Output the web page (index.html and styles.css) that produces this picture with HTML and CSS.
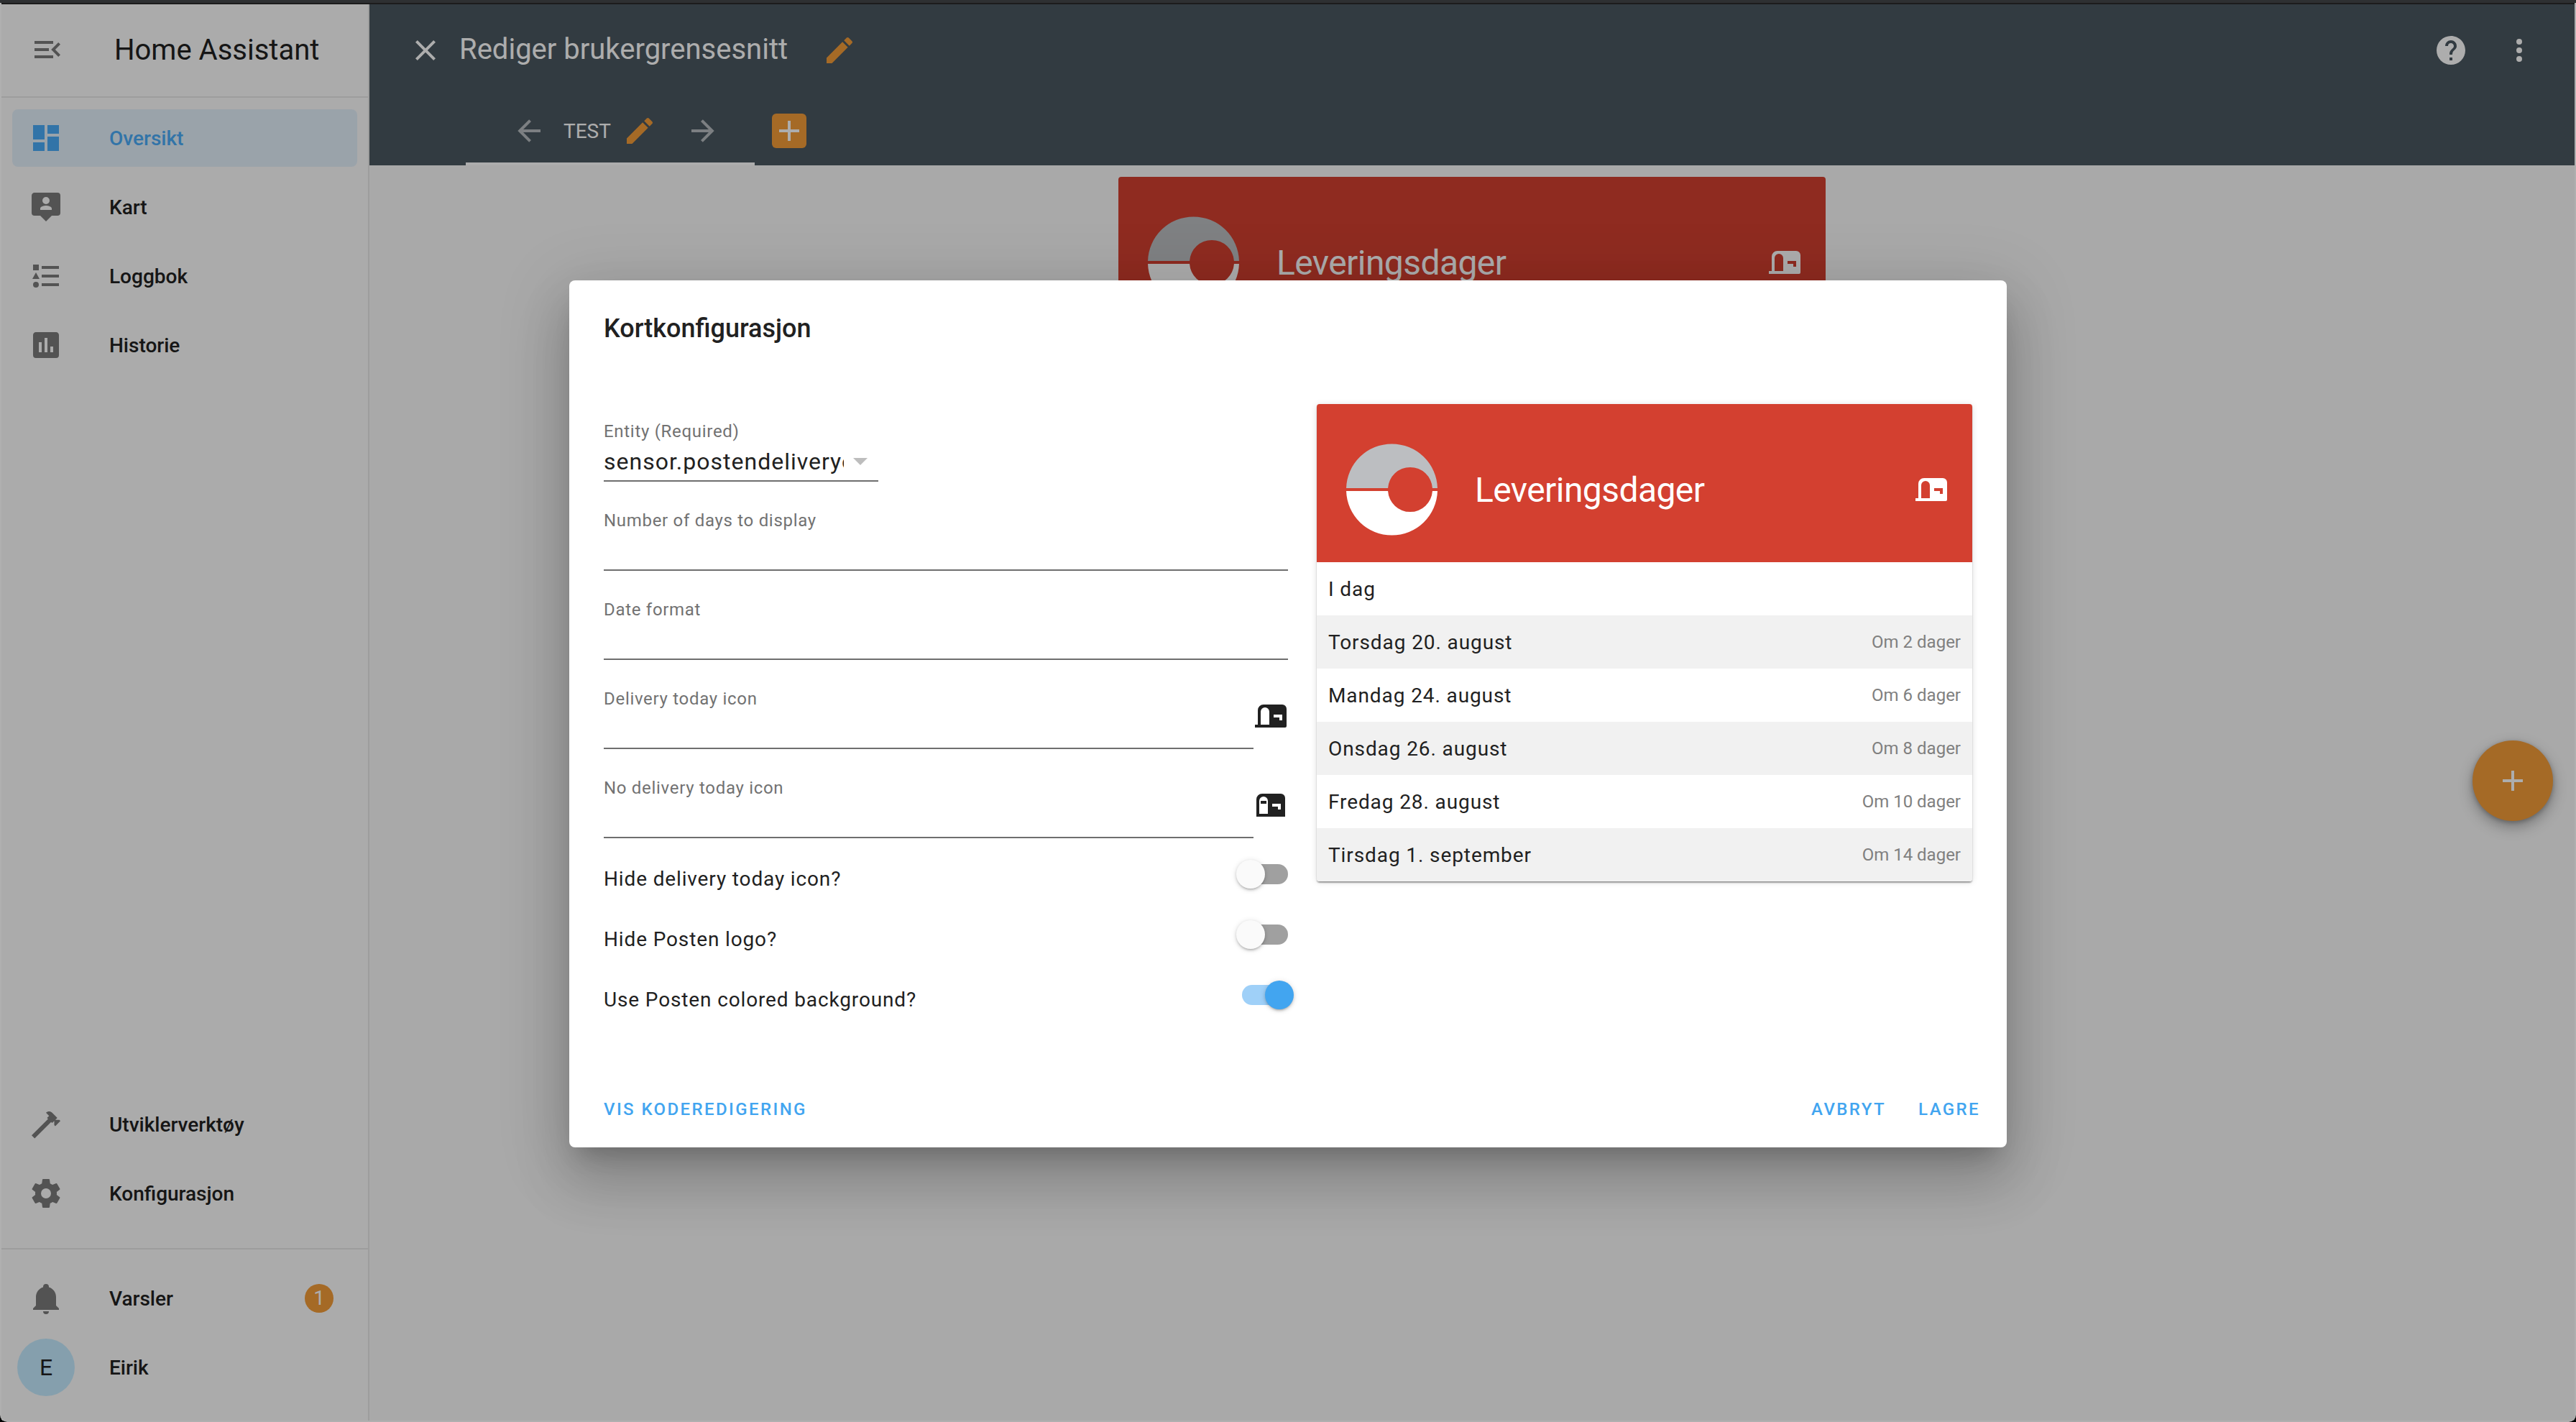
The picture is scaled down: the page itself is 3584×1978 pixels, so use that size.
FILE: index.html
```html
<!DOCTYPE html>
<html lang="nb">
<head>
  <meta charset="utf-8">
  <title>Home Assistant</title>
  <link rel="stylesheet" href="styles.css">
</head>
<body>

  <svg class="sprite" xmlns="http://www.w3.org/2000/svg">
    <symbol id="i-menu-open" viewBox="0 0 24 24"><path d="M21,15.61L19.59,17L14.58,12L19.59,7L21,8.39L17.44,12L21,15.61M3,6H16V8H3V6M3,13V11H13V13H3M3,18V16H16V18H3Z"/></symbol>
    <symbol id="i-dashboard" viewBox="0 0 24 24"><path d="M13,3V9H21V3M13,21H21V11H13M3,21H11V15H3M3,13H11V3H3V13Z"/></symbol>
    <symbol id="i-map" viewBox="0 0 24 24"><path fill-rule="evenodd" d="M2,4C2,2.89 2.9,2 4,2H20A2,2 0 0,1 22,4V16A2,2 0 0,1 20,18H16L12,22L8,18H4A2,2 0 0,1 2,16V4M16,14V13C16,11.67 13.33,11 12,11C10.67,11 8,11.67 8,13V14H16M12,5A2.5,2.5 0 0,0 9.5,7.5A2.5,2.5 0 0,0 12,10A2.5,2.5 0 0,0 14.5,7.5A2.5,2.5 0 0,0 12,5Z"/></symbol>
    <symbol id="i-log" viewBox="0 0 24 24"><path d="M5,9.5L7.5,14H2.5L5,9.5M3,4H7V8H3V4M5,20A2,2 0 0,0 7,18A2,2 0 0,0 5,16A2,2 0 0,0 3,18A2,2 0 0,0 5,20M9,5V7H21V5H9M9,19H21V17H9V19M9,13H21V11H9V13Z"/></symbol>
    <symbol id="i-poll" viewBox="0 0 24 24"><path d="M17,17H15V13H17M13,17H11V7H13M9,17H7V10H9M19,3H5C3.89,3 3,3.89 3,5V19A2,2 0 0,0 5,21H19A2,2 0 0,0 21,19V5C21,3.89 20.1,3 19,3Z"/></symbol>
    <symbol id="i-hammer" viewBox="0 0 24 24"><path d="M2 19.63L13.43 8.2L12.72 7.5L14.14 6.07L12 3.89C13.2 2.7 15.09 2.7 16.27 3.89L19.87 7.5L18.45 8.91H21.29L22 9.62L18.45 13.21L17.74 12.5V9.62L16.27 11.04L15.56 10.33L4.13 21.76L2 19.63Z"/></symbol>
    <symbol id="i-cog" viewBox="0 0 24 24"><path d="M12,15.5A3.5,3.5 0 0,1 8.5,12A3.5,3.5 0 0,1 12,8.5A3.5,3.5 0 0,1 15.5,12A3.5,3.5 0 0,1 12,15.5M19.43,12.97C19.47,12.65 19.5,12.33 19.5,12C19.5,11.67 19.47,11.34 19.43,11L21.54,9.37C21.73,9.22 21.78,8.95 21.66,8.73L19.66,5.27C19.54,5.05 19.27,4.96 19.05,5.05L16.56,6.05C16.04,5.66 15.5,5.32 14.87,5.07L14.5,2.42C14.46,2.18 14.25,2 14,2H10C9.75,2 9.54,2.18 9.5,2.42L9.13,5.07C8.5,5.32 7.96,5.66 7.44,6.05L4.95,5.05C4.73,4.96 4.46,5.05 4.34,5.27L2.34,8.73C2.21,8.95 2.27,9.22 2.46,9.37L4.57,11C4.53,11.34 4.5,11.67 4.5,12C4.5,12.33 4.53,12.65 4.57,12.97L2.46,14.63C2.27,14.78 2.21,15.05 2.34,15.27L4.34,18.73C4.46,18.95 4.73,19.03 4.95,18.95L7.44,17.94C7.96,18.34 8.5,18.68 9.13,18.93L9.5,21.58C9.54,21.82 9.75,22 10,22H14C14.25,22 14.46,21.82 14.5,21.58L14.87,18.93C15.5,18.67 16.04,18.34 16.56,17.94L19.05,18.95C19.27,19.03 19.54,18.95 19.66,18.73L21.66,15.27C21.78,15.05 21.73,14.78 21.54,14.63L19.43,12.97Z"/></symbol>
    <symbol id="i-bell" viewBox="0 0 24 24"><path d="M21,19V20H3V19L5,17V11C5,7.9 7.03,5.17 10,4.29C10,4.19 10,4.1 10,4A2,2 0 0,1 12,2A2,2 0 0,1 14,4C14,4.1 14,4.19 14,4.29C16.97,5.17 19,7.9 19,11V17L21,19M14,21A2,2 0 0,1 12,23A2,2 0 0,1 10,21"/></symbol>
    <symbol id="i-close" viewBox="0 0 24 24"><path d="M19,6.41L17.59,5L12,10.59L6.41,5L5,6.41L10.59,12L5,17.59L6.41,19L12,13.41L17.59,19L19,17.59L13.41,12L19,6.41Z"/></symbol>
    <symbol id="i-pencil" viewBox="0 0 24 24"><path d="M20.71,7.04C21.1,6.65 21.1,6 20.71,5.63L18.37,3.29C18,2.9 17.35,2.9 16.96,3.29L15.12,5.12L18.87,8.87M3,17.25V21H6.75L17.81,9.93L14.06,6.18L3,17.25Z"/></symbol>
    <symbol id="i-help" viewBox="0 0 24 24"><path d="M15.07,11.25L14.17,12.17C13.45,12.89 13,13.5 13,15H11V14.5C11,13.39 11.45,12.39 12.17,11.67L13.41,10.41C13.78,10.05 14,9.55 14,9C14,7.89 13.1,7 12,7A2,2 0 0,0 10,9H8A4,4 0 0,1 12,5A4,4 0 0,1 16,9C16,9.88 15.64,10.67 15.07,11.25M13,19H11V17H13M12,2A10,10 0 0,0 2,12A10,10 0 0,0 12,22A10,10 0 0,0 22,12C22,6.47 17.5,2 12,2Z"/></symbol>
    <symbol id="i-dots" viewBox="0 0 24 24"><path d="M12,16A2,2 0 0,1 14,18A2,2 0 0,1 12,20A2,2 0 0,1 10,18A2,2 0 0,1 12,16M12,10A2,2 0 0,1 14,12A2,2 0 0,1 12,14A2,2 0 0,1 10,12A2,2 0 0,1 12,10M12,4A2,2 0 0,1 14,6A2,2 0 0,1 12,8A2,2 0 0,1 10,6A2,2 0 0,1 12,4Z"/></symbol>
    <symbol id="i-left" viewBox="0 0 24 24"><path d="M20,11V13H8L13.5,18.5L12.08,19.92L4.16,12L12.08,4.08L13.5,5.5L8,11H20Z"/></symbol>
    <symbol id="i-right" viewBox="0 0 24 24"><path d="M4,11V13H16L10.5,18.5L11.92,19.92L19.84,12L11.92,4.08L10.5,5.5L16,11H4Z"/></symbol>
    <symbol id="i-plus" viewBox="0 0 24 24"><path d="M19,13H13V19H11V13H5V11H11V5H13V11H19V13Z"/></symbol>
    <symbol id="i-mail-open" viewBox="0 0 24 24"><path fill-rule="evenodd" d="M7 4H20A3 3 0 0 1 23 7V19A1 1 0 0 1 22 20H1V18H3V8A4 4 0 0 1 7 4ZM5 18H11V9A3 3 0 0 0 5 9ZM14 11V13H18V15H20V11Z"/></symbol>
    <symbol id="i-mail-closed" viewBox="0 0 24 24"><path fill-rule="evenodd" d="M6 4H19A3 3 0 0 1 22 7V20H2V8A4 4 0 0 1 6 4ZM4 18H10V9A3 3 0 0 0 4 9ZM5 9V11H9V9ZM13 11V13H17V15H19V11Z"/></symbol>
    <symbol id="i-posten" viewBox="0 0 128 128"><path fill="#bcbec1" d="M.03 62A63.5 63.5 0 0 1 126.97 62H119.94A31 31 0 0 0 58.06 62Z"/><path fill="#fff" d="M.03 66H58.06A31 31 0 0 0 119.94 66H126.97A63.5 63.5 0 0 1 .03 66Z"/></symbol>
  </svg>

  <div class="app">
    <aside class="sidebar">
      <div class="sidebar-head">
        <svg class="icon"><use href="#i-menu-open"/></svg>
        <span class="sidebar-title">Home Assistant</span>
      </div>
      <nav class="nav">
        <a class="nav-item selected"><svg class="icon"><use href="#i-dashboard"/></svg><span>Oversikt</span></a>
        <a class="nav-item"><svg class="icon"><use href="#i-map"/></svg><span>Kart</span></a>
        <a class="nav-item"><svg class="icon"><use href="#i-log"/></svg><span>Loggbok</span></a>
        <a class="nav-item"><svg class="icon"><use href="#i-poll"/></svg><span>Historie</span></a>
      </nav>
      <nav class="nav nav-tools">
        <a class="nav-item"><svg class="icon"><use href="#i-hammer"/></svg><span>Utviklerverktøy</span></a>
        <a class="nav-item"><svg class="icon"><use href="#i-cog"/></svg><span>Konfigurasjon</span></a>
      </nav>
      <nav class="nav nav-user">
        <a class="nav-item"><svg class="icon"><use href="#i-bell"/></svg><span>Varsler</span><b class="badge">1</b></a>
        <a class="nav-item user"><span class="avatar">E</span><span>Eirik</span></a>
      </nav>
    </aside>

    <main class="main">
      <header class="toolbar">
        <div class="toolbar-top">
          <svg class="icon close"><use href="#i-close"/></svg>
          <span class="toolbar-title">Rediger brukergrensesnitt</span>
          <svg class="icon accent"><use href="#i-pencil"/></svg>
          <span class="grow"></span>
          <svg class="icon help"><use href="#i-help"/></svg>
          <svg class="icon"><use href="#i-dots"/></svg>
        </div>
        <div class="tabs">
          <div class="tab">
            <svg class="icon dim"><use href="#i-left"/></svg>
            <span class="tab-name">TEST</span>
            <svg class="icon accent"><use href="#i-pencil"/></svg>
            <svg class="icon dim"><use href="#i-right"/></svg>
          </div>
          <span class="tab-add"><svg class="icon"><use href="#i-plus"/></svg></span>
        </div>
      </header>
      <div class="content">
        <section class="card card-behind">
          <div class="card-head">
            <svg class="logo"><use href="#i-posten"/></svg>
            <span class="card-title">Leveringsdager</span>
            <svg class="icon"><use href="#i-mail-open"/></svg>
          </div>
        </section>
      </div>
    </main>

    <span class="fab"><svg class="icon"><use href="#i-plus"/></svg></span>

    <div class="scrim">
      <div class="dialog">
        <h2 class="dialog-title">Kortkonfigurasjon</h2>
        <div class="dialog-body">
          <form class="editor">
            <div class="select">
              <label class="label">Entity (Required)</label>
              <div class="select-value">
                <span class="select-text">sensor.postendeliveryoslo</span>
                <i class="select-arrow"></i>
              </div>
            </div>
            <div class="field"><label class="label">Number of days to display</label></div>
            <div class="field"><label class="label">Date format</label></div>
            <div class="icon-field">
              <div class="field"><label class="label">Delivery today icon</label></div>
              <svg class="icon"><use href="#i-mail-open"/></svg>
            </div>
            <div class="icon-field">
              <div class="field"><label class="label">No delivery today icon</label></div>
              <svg class="icon"><use href="#i-mail-closed"/></svg>
            </div>
            <div class="switches">
              <div class="switch-row"><span>Hide delivery today icon?</span><i class="switch"></i></div>
              <div class="switch-row"><span>Hide Posten logo?</span><i class="switch"></i></div>
              <div class="switch-row"><span>Use Posten colored background?</span><i class="switch on"></i></div>
            </div>
          </form>
          <section class="card preview">
            <div class="card-head">
              <svg class="logo"><use href="#i-posten"/></svg>
              <span class="card-title">Leveringsdager</span>
              <svg class="icon"><use href="#i-mail-open"/></svg>
            </div>
            <div class="day"><span>I dag</span></div>
            <div class="day"><span>Torsdag 20. august</span><small>Om 2 dager</small></div>
            <div class="day"><span>Mandag 24. august</span><small>Om 6 dager</small></div>
            <div class="day"><span>Onsdag 26. august</span><small>Om 8 dager</small></div>
            <div class="day"><span>Fredag 28. august</span><small>Om 10 dager</small></div>
            <div class="day"><span>Tirsdag 1. september</span><small>Om 14 dager</small></div>
          </section>
        </div>
        <div class="dialog-actions">
          <a class="action">VIS KODEREDIGERING</a>
          <span class="grow"></span>
          <a class="action">AVBRYT</a>
          <a class="action">LAGRE</a>
        </div>
      </div>
    </div>
  </div>

</body>
</html>
```

FILE: styles.css
```css
* {
  box-sizing: border-box;
}
html {
  height: 100%;
  background: #000;
}
body {
  height: 100%;
  margin: 0;
  background: #b0b0b0;
  border-top: 4px solid #2e3032;
  border-radius: 0 0 10px 10px;
  font-family: Roboto, sans-serif;
  color: #212121;
  overflow: hidden;
}
.sprite {
  display: none;
}
.grow {
  flex: 1;
}
.icon {
  width: 48px;
  height: 48px;
  flex: none;
  fill: currentColor;
}

/* window */
.app {
  position: relative;
  display: flex;
  height: 1972px;
  margin: 0 2px;
  border-top: 2px solid #1c1c1c;
  background: #f9f9f9;
  overflow: hidden;
}

/* sidebar */
.sidebar {
  width: 512px;
  flex: none;
  display: flex;
  flex-direction: column;
  background: #fcfcfc;
  border-right: 2px solid #e8e8e8;
}
.sidebar-head {
  display: flex;
  align-items: center;
  height: 130px;
  padding: 0 0 2px 40px;
  border-bottom: 2px solid #e8e8e8;
  color: #7b7b7b;
}
.sidebar-title {
  margin-left: 69px;
  font-size: 40px;
  color: #212121;
}
.nav {
  display: flex;
  flex-direction: column;
  gap: 16px;
}
.sidebar-head + .nav {
  flex: 1;
  padding-top: 16px;
}
.nav-tools {
  padding-bottom: 36px;
  border-bottom: 2px solid #e8e8e8;
}
.nav-user {
  padding: 28px 0 34px;
}
.nav-item {
  display: flex;
  align-items: center;
  gap: 64px;
  height: 80px;
  margin: 0 15px;
  padding: 0 23px;
  border-radius: 8px;
  color: #7b7b7b;
}
.nav-item span {
  font-size: 28px;
  font-weight: 500;
  color: #212121;
}
.nav-item.selected {
  background: #e4f1fb;
  color: #4aacf8;
}
.nav-item.selected span {
  color: #4aacf8;
}
.badge {
  width: 40px;
  height: 40px;
  margin-left: auto;
  margin-right: 10px;
  border-radius: 50%;
  background: #f49c39;
  color: #fff;
  font: 400 28px/40px Roboto, sans-serif;
  text-align: center;
}
.user {
  gap: 48px;
  padding-left: 7px;
}
.nav-item .avatar {
  width: 80px;
  height: 80px;
  flex: none;
  border-radius: 50%;
  background: #c4ebff;
  font-size: 32px;
  font-weight: 400;
  line-height: 80px;
  text-align: center;
}

/* toolbar */
.main {
  flex: 1;
  min-width: 0;
  display: flex;
  flex-direction: column;
}
.toolbar {
  height: 224px;
  flex: none;
  background: #4b5861;
  color: #fff;
}
.toolbar-top {
  display: flex;
  align-items: center;
  height: 128px;
  padding: 0 53px 0 54px;
}
.toolbar-title {
  margin: 0 48px 0 23px;
  font-size: 40px;
  position: relative;
  top: -2px;
}
.accent {
  color: #f49c39;
}
.help {
  margin-right: 47px;
}
.tabs {
  display: flex;
  align-items: center;
  height: 96px;
  padding-left: 134px;
}
.tab {
  display: flex;
  align-items: center;
  width: 402px;
  height: 96px;
  padding: 4px 0 0 64px;
  border-bottom: 4px solid #fff;
}
.tab .dim {
  color: rgba(255, 255, 255, .6);
}
.tab-name {
  margin: 0 16px 0 24px;
  font-size: 28px;
}
.tab .accent {
  margin-right: 40px;
}
.tab-add {
  display: flex;
  align-items: center;
  justify-content: center;
  width: 48px;
  height: 48px;
  margin-left: 24px;
  border-radius: 6px;
  background: #f49c39;
}

/* lovelace card */
.content {
  flex: 1;
  padding-top: 16px;
}
.card {
  border-radius: 4px;
  background: #fff;
  overflow: hidden;
}
.card-behind {
  width: 984px;
  margin-left: 1042px;
}
.card-head {
  display: flex;
  align-items: center;
  height: 220px;
  padding: 18px 33px 0 41px;
  background: #d34030;
  color: #fff;
}
.logo {
  width: 128px;
  height: 128px;
  flex: none;
}
.card-title {
  flex: 1;
  margin-left: 51px;
  font-size: 48px;
  letter-spacing: -.576px;
}
.preview {
  width: 912px;
  flex: none;
  align-self: flex-start;
  box-shadow: 0 2px 2px rgba(0, 0, 0, .28), 0 1px 10px rgba(0, 0, 0, .12), 0 3px 2px -2px rgba(0, 0, 0, .2);
}
.day {
  display: flex;
  align-items: center;
  justify-content: space-between;
  height: 74px;
  padding: 0 16px;
  font-size: 28px;
  letter-spacing: .9px;
}
.day:nth-child(odd) {
  background: #f1f1f1;
}
.day small {
  font-size: 24px;
  letter-spacing: 0;
  color: #808080;
}

/* fab */
.fab {
  position: absolute;
  left: 3438px;
  top: 1024px;
  display: flex;
  align-items: center;
  justify-content: center;
  width: 112px;
  height: 112px;
  border-radius: 50%;
  background: #f49c39;
  color: #fff;
  box-shadow: 0 8px 20px rgba(0, 0, 0, .3), 0 2px 6px rgba(0, 0, 0, .24);
}

/* dialog */
.scrim {
  position: absolute;
  inset: 0;
  display: flex;
  align-items: center;
  justify-content: center;
  padding-top: 4px;
  background: rgba(0, 0, 0, .32);
}
.dialog {
  width: 2000px;
  border-radius: 8px;
  background: #fff;
  box-shadow: 0 22px 30px -14px rgba(0, 0, 0, .2), 0 48px 76px 6px rgba(0, 0, 0, .14), 0 18px 92px 16px rgba(0, 0, 0, .12);
}
.dialog-title {
  margin: 0;
  padding: 48px 48px 86px;
  font-size: 36px;
  font-weight: 500;
  line-height: 38px;
}
.dialog-body {
  display: flex;
  gap: 40px;
  padding: 0 48px;
}
.editor {
  flex: 1;
  min-width: 0;
}
.label {
  display: block;
  font-size: 24px;
  line-height: 28px;
  letter-spacing: .7px;
  color: #727272;
}
.select {
  width: 382px;
  padding-top: 24px;
  border-bottom: 2px solid #6e6e6e;
}
.select-value {
  display: flex;
  align-items: center;
  height: 46px;
  margin-top: 8px;
  padding-bottom: 6px;
}
.select-text {
  width: 334px;
  overflow: hidden;
  white-space: nowrap;
  font-size: 32px;
  letter-spacing: 1px;
}
.select-arrow {
  width: 0;
  height: 0;
  margin-left: 13px;
  border: 10px solid transparent;
  border-top-color: #bdbdbd;
  border-bottom: 0;
}
.field {
  flex: 1;
  height: 124px;
  padding-top: 40px;
  border-bottom: 2px solid #6e6e6e;
}
.icon-field {
  display: flex;
  align-items: flex-start;
  color: #212121;
}
.icon-field .icon {
  margin-top: 54px;
}
.switches {
  margin-top: 14px;
}
.switch-row {
  display: flex;
  align-items: center;
  justify-content: space-between;
  height: 84px;
  font-size: 28px;
  letter-spacing: .86px;
}
.switch {
  position: relative;
  width: 64px;
  height: 28px;
  margin-bottom: 12px;
  border-radius: 14px;
  background: #a0a0a0;
}
.switch::after {
  content: "";
  position: absolute;
  left: -8px;
  top: -6px;
  width: 40px;
  height: 40px;
  border-radius: 50%;
  background: #fafafa;
  box-shadow: 0 3px 3px -2px rgba(0, 0, 0, .2), 0 2px 4px rgba(0, 0, 0, .14), 0 1px 8px rgba(0, 0, 0, .12);
}
.switch.on {
  background: #9fd0f8;
}
.switch.on::after {
  left: 32px;
  background: #42a5f0;
}
.dialog-actions {
  display: flex;
  gap: 45px;
  padding: 95px 37px 37px 48px;
}
.action {
  font-size: 24px;
  font-weight: 500;
  line-height: 32px;
  letter-spacing: 2.4px;
  color: #42a5f0;
}
```
